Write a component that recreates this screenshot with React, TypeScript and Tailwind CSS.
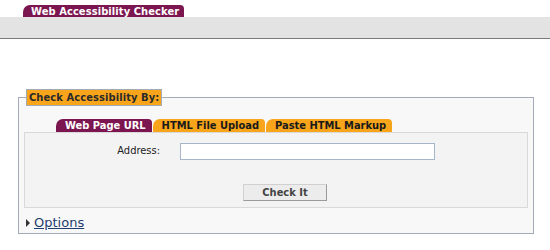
import React from "react";

const font = { fontFamily: '"DejaVu Sans Condensed", "DejaVu Sans", Verdana, sans-serif' };
const font2 = { fontFamily: '"DejaVu Sans", Verdana, sans-serif' };

export default function App() {
  return (
    <div className="w-[550px] h-[250px] bg-white overflow-hidden" style={font}>
      {/* header */}
      <div className="pt-[5px]">
        <div className="pl-[23px] flex">
          <div className="h-[12px] bg-[#7b1650] text-white font-bold text-[11px] leading-[13px] pl-[8px] pr-[5px] rounded-tl-[7px] rounded-tr-[4px] tracking-[0.1px]">
            Web Accessibility Checker
          </div>
        </div>
        <div className="h-[22px] bg-[#e3e3e3] border-b border-[#7a7a7a]"></div>
      </div>

      {/* fieldset */}
      <fieldset className="mt-[50px] ml-[18px] w-[516px] h-[145px] border border-[#a3aab8] bg-[#f8f8f8] p-0">
        <legend className="ml-[7px] bg-[#f9a51b] border border-[#a3aab8] text-[#2a2a2a] font-bold text-[11px] leading-[15px] px-[2px] tracking-[0.1px]">
          Check Accessibility By:
        </legend>
        <div className="px-[5px]">
          <div className="flex pl-[32px] pt-[13px] gap-[1px] items-end">
            <div className="h-[13px] bg-[#7b1650] text-white font-bold text-[11px] leading-[14px] pl-[9px] pr-[6px] rounded-tl-[7px] rounded-tr-[4px]">
              Web Page URL
            </div>
            <div className="h-[13px] bg-[#f9a51b] text-[#1a1a1a] font-bold text-[11px] leading-[14px] pl-[9px] pr-[6px] rounded-tl-[7px] rounded-tr-[4px]">
              HTML File Upload
            </div>
            <div className="h-[13px] bg-[#f9a51b] text-[#1a1a1a] font-bold text-[11px] leading-[14px] pl-[9px] pr-[6px] rounded-tl-[7px] rounded-tr-[4px]">
              Paste HTML Markup
            </div>
          </div>
          <div className="h-[76px] border border-[#d9d9d9] bg-[#f3f3f3]">
            <div className="flex items-center mt-[10px]">
              <label className="w-[135px] text-right text-[11px] text-[#222]">Address:</label>
              <input
                className="ml-[20px] w-[255px] h-[17px] border border-[#a6b6c8] bg-white outline-none"
                defaultValue=""
              />
            </div>
            <div className="mt-[19px] pl-[218px]">
              <button className="w-[84px] h-[17px] bg-[#ececec] border border-[#d0d0d0] border-r-[#9a9a9a] border-b-[#9a9a9a] text-[11px] font-bold text-[#444] leading-[15px]">
                Check It
              </button>
            </div>
          </div>
          <div className="flex items-center mt-[7px]" style={font2}>
            <svg width="6" height="8" viewBox="0 0 6 8" className="ml-[1px] mr-[3px]">
              <path d="M1 0 L5 4 L1 8 Z" fill="#333" />
            </svg>
            <a href="#" className="text-[13px] text-[#1f3d6e] underline leading-[16px]">
              Options
            </a>
          </div>
        </div>
      </fieldset>
    </div>
  );
}
